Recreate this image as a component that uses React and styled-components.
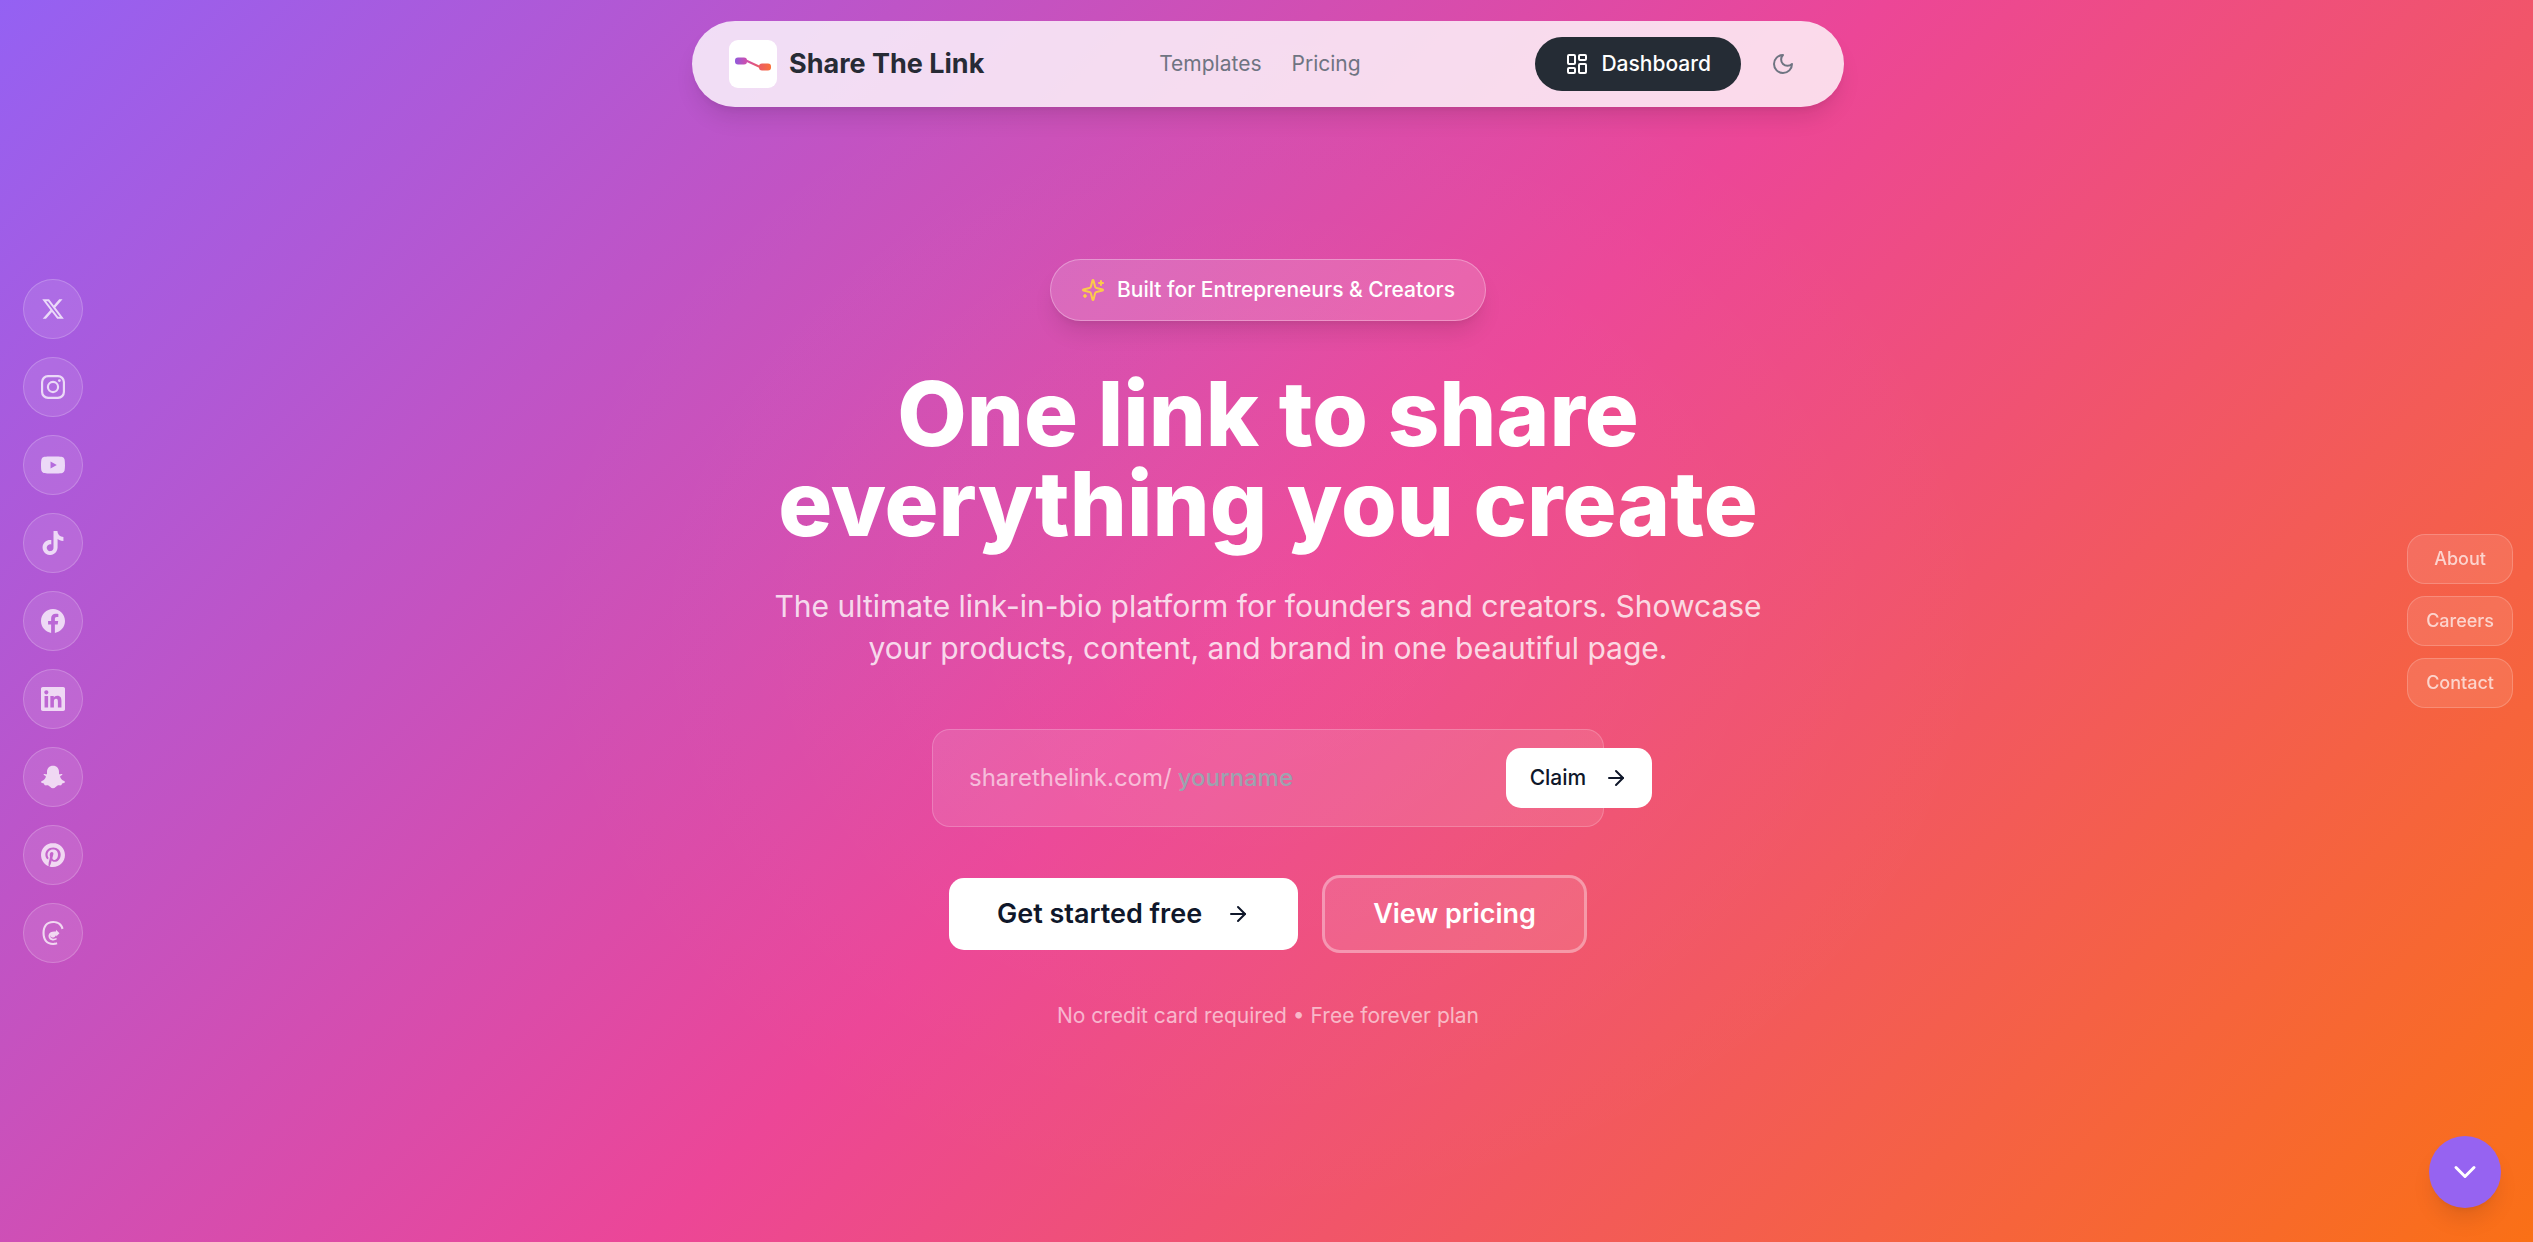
import styled, { createGlobalStyle } from "styled-components";
import { ArrowRight, ChevronDown, LayoutDashboard } from "lucide-react";

const GlobalStyle = createGlobalStyle`
  * {
    box-sizing: border-box;
  }

  body {
    margin: 0;
    font-family: Inter, "Liberation Sans", sans-serif;
    color: white;
  }

  a {
    color: inherit;
    text-decoration: none;
  }

  button, input {
    font: inherit;
    color: inherit;
    border: 0;
    background: none;
  }
`;

const Page = styled.div`
  display: flex;
  flex-direction: column;
  align-items: center;
  min-height: 100vh;
  padding: 21px 21px 48px 24px;
  background:
    radial-gradient(ellipse 30% 50% at 50% 50%, rgba(255, 255, 255, 0.04), transparent),
    linear-gradient(135deg, #9461f3 0%, #ec4697 50%, #fa7016 100%);
`;

const NavBar = styled.header`
  display: flex;
  align-items: center;
  justify-content: space-between;
  width: 100%;
  max-width: 1152px;
  padding: 16px 37px;
  border-radius: 43px;
  background: rgba(255, 255, 255, 0.8);
  box-shadow: 0 15px 22px -4px rgba(0, 0, 0, 0.1), 0 6px 9px -6px rgba(0, 0, 0, 0.1);
`;

const Brand = styled.a`
  display: flex;
  align-items: center;
  gap: 12px;
  color: #272b35;
  font-size: 27px;
  font-weight: 700;
  line-height: 42px;
`;

const LogoTile = styled.span`
  display: flex;
  width: 48px;
  height: 48px;
  border-radius: 9px;
  background: white;
`;

const NavLinks = styled.nav`
  display: flex;
  gap: 30px;
  color: #6f7482;
  font-size: 21px;
  line-height: 30px;
`;

const NavActions = styled.div`
  display: flex;
  align-items: center;
  gap: 18px;
`;

const DashboardLink = styled.a`
  display: flex;
  align-items: center;
  gap: 12px;
  padding: 12px 30px;
  border-radius: 27px;
  background: #252c35;
  font-size: 21px;
  font-weight: 500;
  line-height: 30px;
`;

const ThemeButton = styled.button`
  display: flex;
  align-items: center;
  justify-content: center;
  width: 48px;
  height: 48px;
  padding: 0;
  color: #6f7482;
`;

const LineIcon = styled.svg.attrs({ viewBox: "0 0 24 24", "aria-hidden": true })`
  width: 24px;
  height: 24px;
  fill: none;
  stroke: ${(props) => props.$color || "currentColor"};
  stroke-width: 2;
  stroke-linecap: round;
  stroke-linejoin: round;
`;

const Hero = styled.main`
  display: flex;
  flex-direction: column;
  align-items: center;
  width: 100%;
  padding-top: 152px;
  text-align: center;
`;

const Badge = styled.div`
  display: flex;
  align-items: center;
  gap: 12px;
  padding: 15px 30px;
  border: 1px solid rgba(255, 255, 255, 0.3);
  border-radius: 31px;
  background: rgba(255, 255, 255, 0.15);
  box-shadow: 0 15px 22px -4px rgba(0, 0, 0, 0.1), 0 6px 9px -6px rgba(0, 0, 0, 0.1);
  font-size: 21px;
  font-weight: 500;
  line-height: 30px;
`;

const Title = styled.h1`
  max-width: 1152px;
  margin: 48px 0 36px;
  font-size: 90px;
  font-weight: 800;
  line-height: 90px;
`;

const Subtitle = styled.p`
  max-width: 1008px;
  margin: 0 0 60px;
  color: rgba(255, 255, 255, 0.8);
  font-size: 30px;
  line-height: 42px;
`;

const ClaimForm = styled.form`
  display: flex;
  align-items: center;
  width: 100%;
  max-width: 672px;
  height: 98px;
  padding-left: 36px;
  border: 1px solid rgba(255, 255, 255, 0.2);
  border-radius: 18px;
  background: rgba(255, 255, 255, 0.1);
  font-size: 24px;
  line-height: 36px;
`;

const Prefix = styled.label`
  color: rgba(255, 255, 255, 0.6);
`;

const NameInput = styled.input`
  flex: none;
  width: 316px;
  margin-right: 18px;
  padding: 0 6px;
  outline: none;
  font-weight: 500;

  &::placeholder {
    color: #9ca3af;
    opacity: 1;
  }
`;

const ClaimButton = styled.button`
  display: flex;
  flex: none;
  align-items: center;
  gap: 18px;
  height: 60px;
  padding: 0 24px;
  border-radius: 15px;
  background: white;
  color: #0f172a;
  font-size: 21px;
  font-weight: 500;
`;

const Actions = styled.div`
  display: flex;
  align-items: center;
  gap: 24px;
  margin: 48px 0;
`;

const ActionLink = styled.a`
  display: flex;
  align-items: center;
  gap: 24px;
  padding: 15px 48px;
  border: ${(props) => (props.$outlined ? "3px solid rgba(255, 255, 255, 0.4)" : "0")};
  border-radius: ${(props) => (props.$outlined ? "18px" : "15px")};
  background: ${(props) => (props.$outlined ? "rgba(255, 255, 255, 0.1)" : "white")};
  background-clip: padding-box;
  color: ${(props) => (props.$outlined ? "white" : "#0f172a")};
  font-size: 27px;
  font-weight: 600;
  line-height: 42px;
`;

const Note = styled.p`
  margin: 0;
  color: rgba(255, 255, 255, 0.6);
  font-size: 21px;
  line-height: 30px;
`;

const SideRail = styled.nav`
  position: fixed;
  top: 50%;
  left: ${(props) => (props.$side === "left" ? "23px" : "auto")};
  right: ${(props) => (props.$side === "right" ? "20px" : "auto")};
  display: flex;
  flex-direction: column;
  gap: ${(props) => (props.$side === "left" ? "18px" : "12px")};
  transform: translateY(-50%);
`;

const SocialLink = styled.a`
  display: flex;
  align-items: center;
  justify-content: center;
  width: 60px;
  height: 60px;
  border: 1px solid rgba(255, 255, 255, 0.2);
  border-radius: 50%;
  background: rgba(255, 255, 255, 0.1);
  color: rgba(255, 255, 255, 0.75);
`;

const PageLink = styled.a`
  padding: 12px 18px;
  border: 1px solid rgba(255, 255, 255, 0.2);
  border-radius: 18px;
  background: rgba(255, 255, 255, 0.1);
  color: rgba(255, 255, 255, 0.7);
  font-size: 18px;
  font-weight: 500;
  line-height: 24px;
  text-align: center;
`;

const ScrollButton = styled.button`
  position: fixed;
  right: 32px;
  bottom: 34px;
  display: flex;
  align-items: center;
  justify-content: center;
  width: 72px;
  height: 72px;
  padding: 0;
  border-radius: 50%;
  background: #9663f1;
  box-shadow: 0 15px 22px -4px rgba(0, 0, 0, 0.1), 0 6px 9px -6px rgba(0, 0, 0, 0.1);
`;

const socials = [
  {
    name: "X",
    path: "M18.244 2.25h3.308l-7.227 8.26 8.502 11.24H16.17l-5.214-6.817L4.99 21.75H1.68l7.73-8.835L1.254 2.25H8.08l4.713 6.231zm-1.161 17.52h1.833L7.084 4.126H5.117z",
  },
  {
    name: "Instagram",
    path: "M7 0h10a7 7 0 0 1 7 7v10a7 7 0 0 1-7 7H7a7 7 0 0 1-7-7V7a7 7 0 0 1 7-7zm.2 2.16A5.04 5.04 0 0 0 2.16 7.2v9.6a5.04 5.04 0 0 0 5.04 5.04h9.6a5.04 5.04 0 0 0 5.04-5.04V7.2a5.04 5.04 0 0 0-5.04-5.04zM12 5.838a6.162 6.162 0 1 1 0 12.324 6.162 6.162 0 0 1 0-12.324zM12 8a4 4 0 1 0 0 8 4 4 0 0 0 0-8zm6.406-3.845a1.44 1.44 0 1 1 0 2.88 1.44 1.44 0 0 1 0-2.88z",
  },
  {
    name: "YouTube",
    path: "M23.498 6.186a3.016 3.016 0 0 0-2.122-2.136C19.505 3.545 12 3.545 12 3.545s-7.505 0-9.377.505A3.017 3.017 0 0 0 .502 6.186C0 8.07 0 12 0 12s0 3.93.502 5.814a3.016 3.016 0 0 0 2.122 2.136c1.871.505 9.376.505 9.376.505s7.505 0 9.377-.505a3.015 3.015 0 0 0 2.122-2.136C24 15.93 24 12 24 12s0-3.93-.502-5.814zM9.545 15.568V8.432L15.818 12l-6.273 3.568z",
  },
  {
    name: "TikTok",
    path: "M12.525.02c1.31-.02 2.61-.01 3.91-.02.08 1.53.63 3.09 1.75 4.17 1.12 1.11 2.7 1.62 4.24 1.79v4.03c-1.44-.05-2.89-.35-4.2-.97-.57-.26-1.1-.59-1.62-.93-.01 2.92.01 5.84-.02 8.75-.08 1.4-.54 2.79-1.35 3.94-1.31 1.92-3.58 3.17-5.91 3.21-1.43.08-2.86-.31-4.08-1.03-2.02-1.19-3.44-3.37-3.65-5.71-.02-.5-.03-1-.01-1.49.18-1.9 1.12-3.72 2.58-4.96 1.66-1.44 3.98-2.13 6.15-1.72.02 1.48-.04 2.96-.04 4.44-.99-.32-2.15-.23-3.02.37-.63.41-1.11 1.04-1.36 1.75-.21.51-.15 1.07-.14 1.61.24 1.64 1.82 3.02 3.5 2.87 1.12-.01 2.19-.66 2.77-1.61.19-.33.4-.67.41-1.06.1-1.79.06-3.57.07-5.36.01-4.03-.01-8.05.02-12.07z",
  },
  {
    name: "Facebook",
    path: "M24 12.073c0-6.627-5.373-12-12-12s-12 5.373-12 12c0 5.99 4.388 10.954 10.125 11.854v-8.385H7.078v-3.47h3.047V9.43c0-3.007 1.792-4.669 4.533-4.669 1.312 0 2.686.235 2.686.235v2.953H15.83c-1.491 0-1.956.925-1.956 1.874v2.25h3.328l-.532 3.47h-2.796v8.385C19.612 23.027 24 18.062 24 12.073z",
  },
  {
    name: "LinkedIn",
    path: "M20.447 20.452h-3.554v-5.569c0-1.328-.027-3.037-1.852-3.037-1.853 0-2.136 1.445-2.136 2.939v5.667H9.351V9h3.414v1.561h.046c.477-.9 1.637-1.85 3.37-1.85 3.601 0 4.267 2.37 4.267 5.455v6.286zM5.337 7.433c-1.144 0-2.063-.926-2.063-2.065 0-1.138.92-2.063 2.063-2.063 1.14 0 2.064.925 2.064 2.063 0 1.139-.925 2.065-2.064 2.065zm1.782 13.019H3.555V9h3.564v11.452zM22.225 0H1.771C.792 0 0 .774 0 1.729v20.542C0 23.227.792 24 1.771 24h20.451C23.2 24 24 23.227 24 22.271V1.729C24 .774 23.2 0 22.222 0h.003z",
  },
  {
    name: "Snapchat",
    path: "M12 .7c3.8 0 6 2.7 6 6v2.5c1 .1 2-.6 3.2-.1.5.5-.1 1.1-1 1.5-1 .4-1.3.8-.9 1.7.5 1.5 1.5 2.9 3.8 3.6 1.1.4 1.2 1.4.2 1.9-.9.4-1.6.4-2.2.8-.4.5-.3 1.4-1.1 1.7-1.1.3-2.3-.2-3.4.3-1.400.7-2.300 2.700-4.600 2.700s-3.200-2-4.600-2.700c-1.100-.5-2.300 0-3.400-.3-.8-.3-.7-1.200-1.100-1.700-.6-.4-1.300-.4-2.200-.8-1-.5-.9-1.500.2-1.900 2.300-.7 3.300-2.100 3.800-3.600.4-.9.1-1.300-.9-1.700-.9-.4-1.500-1-1-1.500 1.200-.5 2.200.2 3.200.1V6.700c0-3.300 2.200-6 6-6z",
  },
  {
    name: "Pinterest",
    path: "M12.017 0C5.396 0 .029 5.367.029 11.987c0 5.079 3.158 9.417 7.618 11.162-.105-.949-.199-2.403.041-3.439.219-.937 1.406-5.957 1.406-5.957s-.359-.72-.359-1.781c0-1.663.967-2.911 2.168-2.911 1.024 0 1.518.769 1.518 1.688 0 1.029-.653 2.567-.992 3.992-.285 1.193.6 2.165 1.775 2.165 2.128 0 3.768-2.245 3.768-5.487 0-2.861-2.063-4.869-5.008-4.869-3.41 0-5.409 2.562-5.409 5.199 0 1.033.394 2.143.889 2.741.099.12.112.225.085.345-.09.375-.293 1.199-.334 1.363-.053.225-.172.271-.401.165-1.495-.69-2.433-2.878-2.433-4.646 0-3.776 2.748-7.252 7.92-7.252 4.158 0 7.392 2.967 7.392 6.923 0 4.135-2.607 7.462-6.233 7.462-1.214 0-2.354-.629-2.758-1.379l-.749 2.848c-.269 1.045-1.004 2.352-1.498 3.146 1.123.345 2.306.535 3.55.535 6.607 0 11.985-5.365 11.985-11.987C23.97 5.39 18.592.026 11.985.026L12.017 0z",
  },
  {
    name: "Threads",
    path: "M12.186 24h-.007c-3.581-.024-6.334-1.205-8.184-3.509C2.35 18.44 1.5 15.586 1.472 12.01v-.017c.03-3.579.879-6.43 2.525-8.482C5.845 1.205 8.6.024 12.18 0h.014c2.746.02 5.043.725 6.826 2.098 1.677 1.29 2.858 3.13 3.509 5.467l-2.04.569c-1.104-3.96-3.898-5.984-8.304-6.015-2.91.022-5.11.936-6.54 2.717C4.307 6.504 3.616 8.914 3.589 12c.027 3.086.718 5.496 2.057 7.164 1.43 1.783 3.631 2.698 6.54 2.717 1.6-.01 2.7-.2 3.6-.6l.6 1.9c-1.2.5-2.6.8-4.2.819zM7.600 14c.6-3 4.200-4 7.400-3.500V8.800l3.500 3.400-3.300 3.200v-1.500c-1 1.900-2.500 2.800-4 2.500-1.200-.2-1.600-1.200-1-2.200-.8.6-.9 1.800-.2 2.600 1.200 1.200 3.500 1.200 5.300.3l.6 1.200c-2.400 1.600-5.700 1.400-7.300-.4-.9-1-1.300-2.400-1-3.900z",
  },
];

const pages = ["About", "Careers", "Contact"];

function Logo() {
  return (
    <svg width="48" height="48" viewBox="0 0 48 48" fill="none" aria-hidden="true">
      <defs>
        <linearGradient id="link" x1="6" y1="0" x2="42" y2="0" gradientUnits="userSpaceOnUse">
          <stop offset="0" stopColor="#8f5bdc" />
          <stop offset="0.3" stopColor="#cb4fb0" />
          <stop offset="0.65" stopColor="#ea5a68" />
          <stop offset="1" stopColor="#f9703a" />
        </linearGradient>
      </defs>
      <rect x="6" y="17.500" width="12" height="7" rx="3" fill="url(#link)" />
      <path d="M17 20.500L31 27" stroke="url(#link)" strokeWidth="2" />
      <rect x="30" y="23.500" width="12" height="7" rx="3" fill="url(#link)" />
    </svg>
  );
}

function Sparkles() {
  return (
    <LineIcon $color="#fbcb4a">
      <path d="M9.937 15.5A2 2 0 0 0 8.5 14.063l-6.135-1.582a.5.5 0 0 1 0-.962L8.5 9.936A2 2 0 0 0 9.937 8.5l1.582-6.135a.5.5 0 0 1 .963 0L14.063 8.5A2 2 0 0 0 15.5 9.937l6.135 1.581a.5.5 0 0 1 0 .964L15.5 14.063a2 2 0 0 0-1.437 1.437l-1.582 6.135a.5.5 0 0 1-.963 0z" />
      <path d="M20 3v4M22 5h-4M4 17v2M5 18H3" />
    </LineIcon>
  );
}

function Moon() {
  return (
    <LineIcon>
      <path d="M12 3a6 6 0 0 0 9 9 9 9 0 1 1-9-9Z" />
    </LineIcon>
  );
}

export default function App() {
  return (
    <Page>
      <GlobalStyle />
      <NavBar>
        <Brand href="#">
          <LogoTile>
            <Logo />
          </LogoTile>
          Share The Link
        </Brand>
        <NavLinks>
          <a href="#templates">Templates</a>
          <a href="#pricing">Pricing</a>
        </NavLinks>
        <NavActions>
          <DashboardLink href="#dashboard">
            <LayoutDashboard size={24} />
            Dashboard
          </DashboardLink>
          <ThemeButton aria-label="Toggle theme">
            <Moon />
          </ThemeButton>
        </NavActions>
      </NavBar>

      <Hero>
        <Badge>
          <Sparkles />
          Built for Entrepreneurs &amp; Creators
        </Badge>
        <Title>
          One link to share
          <br />
          everything you create
        </Title>
        <Subtitle>
          The ultimate link-in-bio platform for founders and creators. Showcase your products,
          content, and brand in one beautiful page.
        </Subtitle>
        <ClaimForm onSubmit={(e) => e.preventDefault()}>
          <Prefix htmlFor="username">sharethelink.com/</Prefix>
          <NameInput id="username" placeholder="yourname" />
          <ClaimButton type="submit">
            Claim
            <ArrowRight size={24} />
          </ClaimButton>
        </ClaimForm>
        <Actions>
          <ActionLink href="#signup">
            Get started free
            <ArrowRight size={24} />
          </ActionLink>
          <ActionLink href="#pricing" $outlined>
            View pricing
          </ActionLink>
        </Actions>
        <Note>No credit card required • Free forever plan</Note>
      </Hero>

      <SideRail $side="left" aria-label="Social">
        {socials.map((social) => (
          <SocialLink key={social.name} href="#" aria-label={social.name}>
            <svg width="24" height="24" viewBox="0 0 24 24" fill="currentColor" fillRule="evenodd">
              <path d={social.path} />
            </svg>
          </SocialLink>
        ))}
      </SideRail>

      <SideRail $side="right" aria-label="Company">
        {pages.map((page) => (
          <PageLink key={page} href={`#${page.toLowerCase()}`}>
            {page}
          </PageLink>
        ))}
      </SideRail>

      <ScrollButton aria-label="Scroll down">
        <ChevronDown size={36} />
      </ScrollButton>
    </Page>
  );
}
